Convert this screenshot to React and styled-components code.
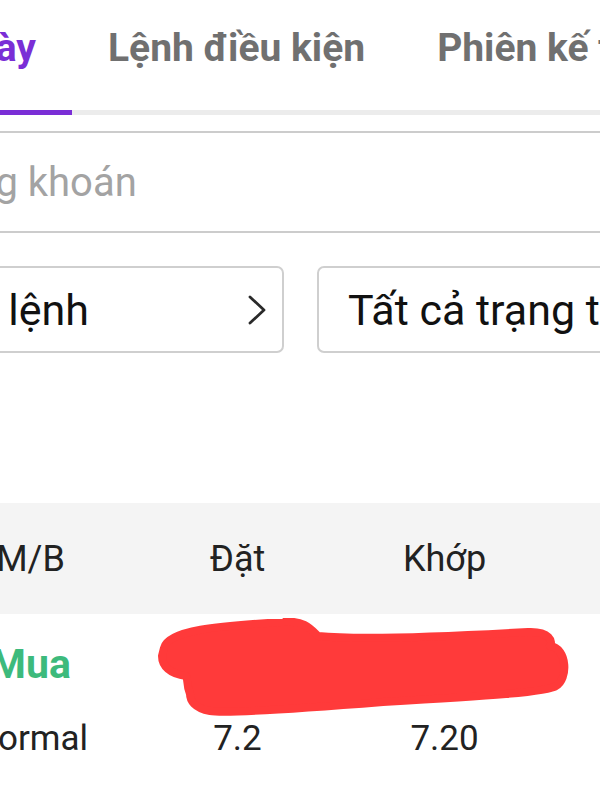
import React from 'react';
import styled, { createGlobalStyle } from 'styled-components';

const GlobalStyle = createGlobalStyle`
    body {
        margin: 0;
        background: #ffffff;
        font-family: Roboto, 'Noto Sans', sans-serif;
    }
`;

const PURPLE = '#7a2ed6';
const GREEN = '#3dba7c';

const Page = styled.div`
    width: 600px;
    height: 800px;
    overflow: hidden;
    background: #ffffff;
`;

const TabBar = styled.div`
    display: grid;
    grid-template-columns: 72px max-content max-content;
`;

const Tab = styled.div`
    display: flex;
    justify-content: ${(props) => (props.$lead ? 'flex-end' : 'flex-start')};
    box-sizing: border-box;
    height: 115px;
    padding: 23px 36px 0;
    white-space: nowrap;
    font-size: 39px;
    font-weight: 700;
    line-height: 50px;
    color: ${(props) => (props.$active ? PURPLE : '#707070')};
    border-bottom: 5px solid ${(props) => (props.$active ? PURPLE : '#ececec')};
`;

const SearchBox = styled.div`
    box-sizing: border-box;
    display: flex;
    align-items: center;
    width: 800px;
    height: 102px;
    margin: 16px 0 0 -180px;
    padding-left: 17px;
    border: 2px solid #cccccc;
    border-radius: 8px;
`;

const SearchInput = styled.input`
    flex: 1;
    border: none;
    outline: none;
    background: transparent;
    font-family: Roboto, sans-serif;
    font-size: 40px;
    color: #222222;
    padding: 0;
    &::placeholder {
        color: #a3a3a3;
    }
`;

const FilterRow = styled.div`
    display: grid;
    grid-template-columns: 399px 384px;
    gap: 33px;
    margin: 33px 0 0 -115px;
`;

const FilterBox = styled.div`
    box-sizing: border-box;
    display: flex;
    align-items: center;
    justify-content: space-between;
    height: 87px;
    padding: 0 15px 0 29px;
    border: 2px solid #cfcfcf;
    border-radius: 7px;
    font-size: 43px;
    color: #111111;
    white-space: nowrap;
    overflow: hidden;
`;

const Chevron = () => (
    <svg width="20" height="32" viewBox="0 0 20 32" fill="none">
        <polyline
            points="3,3 17,16 3,29"
            stroke="#2a2a2a"
            strokeWidth="2.8"
            strokeLinecap="round"
            strokeLinejoin="round"
        />
    </svg>
);

const Table = styled.div`
    margin: 150px 0 0 -73px;
`;

const HeaderRow = styled.div`
    display: grid;
    grid-template-columns: repeat(3, 207px);
    align-items: center;
    height: 111px;
    background: #f4f4f4;
`;

const HeadCell = styled.div`
    text-align: center;
    font-size: 36px;
    color: #222222;
`;

const Body = styled.div`
    position: relative;
    padding-top: 13px;
`;

const Row = styled.div`
    display: grid;
    grid-template-columns: repeat(3, 207px);
    align-items: center;
    height: 74px;
`;

const Cell = styled.div`
    text-align: center;
    white-space: nowrap;
    font-size: ${(props) => (props.$side ? '41px' : '35px')};
    font-weight: ${(props) => (props.$side ? 700 : 400)};
    color: ${(props) => (props.$side ? GREEN : '#222222')};
`;

// vệt tô đỏ che số lượng
const Scribble = styled.svg`
    position: absolute;
    left: 231px;
    top: 4px;
`;

const RedMark = () => (
    <Scribble width="414" height="100" viewBox="0 0 414 100">
        <path
            d="M6 30 C10 12 60 8 125 4 C145 2 152 10 160 18 C200 22 300 18 370 14 C392 13 395 24 392 28 C410 30 410 62 398 68 C390 74 330 78 225 84 C150 90 70 96 52 93 C36 90 32 82 32 76 C28 66 30 60 28 58 C12 56 4 48 4 38 Z"
            fill="#ff3a3a"
            stroke="#ff3a3a"
            strokeWidth="8"
            strokeLinejoin="round"
        />
    </Scribble>
);

const orders = [
    { side: 'Mua', type: '', price: '', matched: '' },
    { side: '', type: 'Normal', price: '7.2', matched: '7.20' },
];

const App = () => {
    return (
        <Page>
            <GlobalStyle />
            <TabBar>
                <Tab $lead $active>
                    Lệnh trong ngày
                </Tab>
                <Tab>Lệnh điều kiện</Tab>
                <Tab>Phiên kế tiếp</Tab>
            </TabBar>
            <SearchBox>
                <SearchInput placeholder='Mã chứng khoán' />
            </SearchBox>
            <FilterRow>
                <FilterBox>
                    <span>Loại lệnh</span>
                    <Chevron />
                </FilterBox>
                <FilterBox>
                    <span>Tất cả trạng thái</span>
                    <Chevron />
                </FilterBox>
            </FilterRow>
            <Table>
                <HeaderRow>
                    <HeadCell>M/B</HeadCell>
                    <HeadCell>Đặt</HeadCell>
                    <HeadCell>Khớp</HeadCell>
                </HeaderRow>
                <Body>
                    <Row>
                        <Cell $side>{orders[0].side}</Cell>
                        <Cell>{orders[0].price}</Cell>
                        <Cell>{orders[0].matched}</Cell>
                    </Row>
                    <Row>
                        <Cell>{orders[1].type}</Cell>
                        <Cell>{orders[1].price}</Cell>
                        <Cell>{orders[1].matched}</Cell>
                    </Row>
                    <RedMark />
                </Body>
            </Table>
        </Page>
    );
};

export default App;
